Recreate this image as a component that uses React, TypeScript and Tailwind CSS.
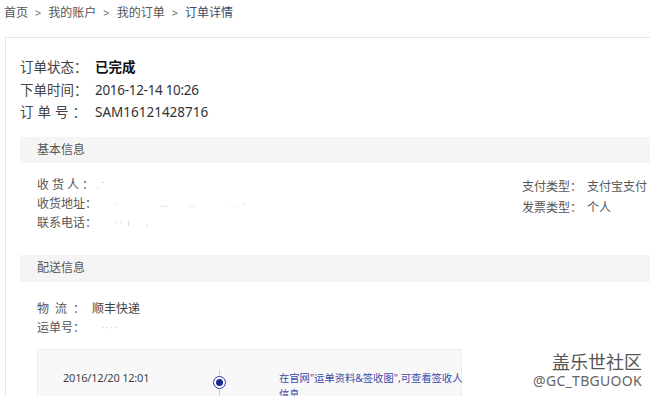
import React from "react";

const font = { fontFamily: '"Noto Sans", "Noto Sans CJK SC", sans-serif' };

function Sep() {
  return <span className="mx-[7px] text-[11px] text-[#666]">&gt;</span>;
}

export default function App() {
  return (
    <div className="relative h-[403px] w-[650px] overflow-hidden bg-white" style={font}>
      <div className="h-[396px] overflow-hidden">
        <nav className="flex h-[26px] items-center whitespace-nowrap pl-[4px] text-[12px] text-[#555]">
          <span>首页</span>
          <Sep />
          <span>我的账户</span>
          <Sep />
          <span>我的订单</span>
          <Sep />
          <span className="text-[#3d4a6b]">订单详情</span>
        </nav>

        <div className="ml-[5px] mt-[11px] h-[400px] border-l border-t border-[#e6e6e6] pl-[14px] pt-[18px]">
          {/* status */}
          <div className="whitespace-nowrap text-[13.5px] leading-[22.5px] text-[#444]">
            <div className="flex">
              <span className="w-[75px] shrink-0">订单状态：</span>
              <span className="font-bold text-[#111]">已完成</span>
            </div>
            <div className="flex">
              <span className="w-[75px] shrink-0">下单时间：</span>
              <span className="tracking-[-0.3px] text-[#333]">2016-12-14 10:26</span>
            </div>
            <div className="flex">
              <span className="w-[75px] shrink-0 tracking-[4px]">订单号：</span>
              <span className="text-[#333]">SAM16121428716</span>
            </div>
          </div>

          {/* basic info */}
          <div className="mt-[13px] flex h-[26px] items-center bg-[#f5f5f5] pl-[17px] text-[12px] text-[#555]">
            基本信息
          </div>
          <div className="mt-[12px] flex whitespace-nowrap pl-[17px] text-[12px] leading-[19px] text-[#555]">
            <div className="flex-1">
              <div className="flex">
                <span className="w-[60px] shrink-0 tracking-[3px]">收货人：</span>
                <span className="text-[8px] text-[#c8c8c8]">. ˉ</span>
              </div>
              <div className="flex">
                <span className="w-[60px] shrink-0">收货地址：</span>
                <span className="whitespace-pre text-[8px] text-[#d0d0d0]">
                  {"         ·                    ....          ...                 .  .  ·"}
                </span>
              </div>
              <div className="flex">
                <span className="w-[60px] shrink-0">联系电话：</span>
                <span className="whitespace-pre pl-[18px] text-[8px] text-[#c8c8c8]">{"· ·   ı        ,"}</span>
              </div>
            </div>
            <div className="w-[128px] shrink-0 pt-[1px] leading-[21px]">
              <div className="flex">
                <span className="w-[65px] shrink-0">支付类型：</span>
                <span>支付宝支付</span>
              </div>
              <div className="flex">
                <span className="w-[65px] shrink-0">发票类型：</span>
                <span>个人</span>
              </div>
            </div>
          </div>

          {/* delivery */}
          <div className="mt-[23px] flex h-[27px] items-center bg-[#f5f5f5] pl-[17px] text-[12px] text-[#555]">
            配送信息
          </div>
          <div className="mt-[17px] whitespace-nowrap pl-[17px] text-[12px] leading-[19px] text-[#555]">
            <div className="flex">
              <span className="w-[55px] shrink-0 tracking-[6px]">物流：</span>
              <span className="text-[#444]">顺丰快递</span>
            </div>
            <div className="flex">
              <span className="w-[55px] shrink-0">运单号：</span>
              <span className="pl-[10px] text-[8px] text-[#c8c8c8]">· · · ·</span>
            </div>
          </div>

          <div className="ml-[17px] mt-[12px] h-[80px] w-[425px] border border-[#ececec] bg-[#f8f8f8] pl-[25px]">
            <div className="flex pt-[20px]">
              <div className="w-[150px] shrink-0 text-[11px] leading-[16px] tracking-[-0.2px] text-[#444]">2016/12/20 12:01</div>
              <div className="flex w-[13px] shrink-0 flex-col items-center">
                <div className="h-[6px] w-px bg-[#cfcfcf]" />
                <div className="flex h-[13px] w-[13px] items-center justify-center rounded-full border-[1.5px] border-[#2a3a9c] bg-white">
                  <div className="h-[7px] w-[7px] rounded-full bg-[#1a2a8c]" />
                </div>
                <div className="h-[20px] w-px bg-[#cfcfcf]" />
              </div>
              <div className="ml-[53px] text-[10.3px] leading-[16px] text-[#3b4aa8]">
                <div className="whitespace-nowrap">在官网"运单资料&amp;签收图",可查看签收人</div>
                <div>信息</div>
              </div>
            </div>
          </div>
        </div>
      </div>

      {/* watermark */}
      <div className="absolute right-[8px] top-[353px] text-right leading-none">
        <div className="text-[18px] text-[#555]">盖乐世社区</div>
        <div className="mt-[3px] text-[14px] tracking-[0.3px] text-[#666]">@GC_TBGUOOK</div>
      </div>
    </div>
  );
}
